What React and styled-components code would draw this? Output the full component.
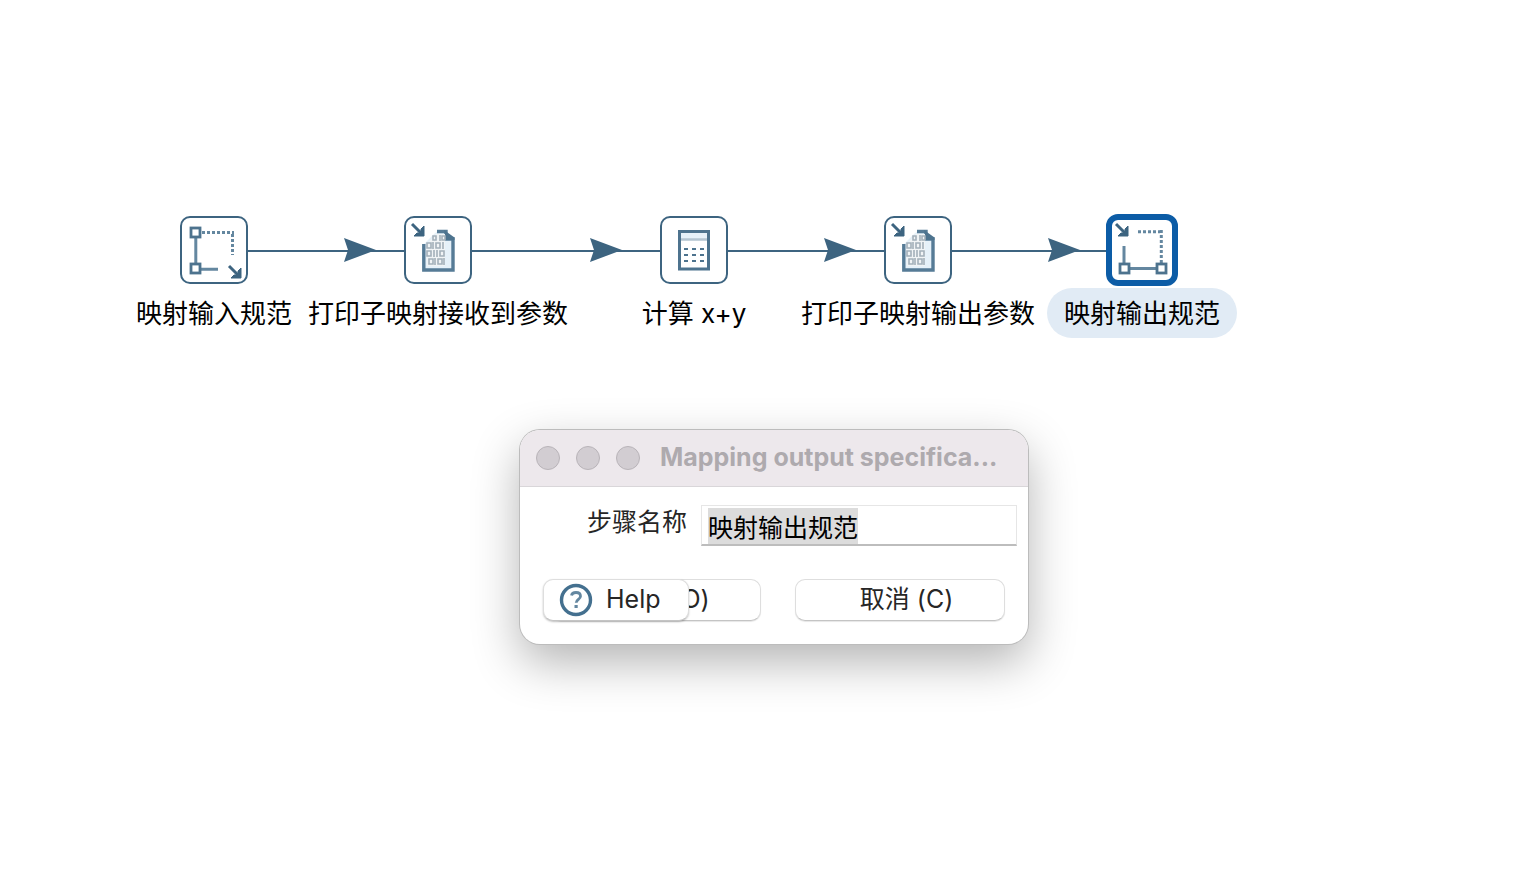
import React, { useEffect, useRef } from "react";
import styled, { createGlobalStyle } from "styled-components";

const ink = "#3d6480";
const mid = "#4d738e";
const soft = "#6487a0";
const tint = "#e6f1f9";

const GlobalStyle = createGlobalStyle`
  *, *::before, *::after { box-sizing: border-box; }
  body {
    margin: 0;
    background: #fff;
    color: #000;
    font-family: Inter, "Noto Sans CJK SC", sans-serif;
  }
  button, input { font: inherit; color: inherit; }
`;

const Canvas = styled.main`
  position: relative;
  width: 100%;
  min-height: 100vh;
  overflow: hidden;
`;

const Hops = styled.svg`
  position: absolute;
  left: 0;
  top: 0;
  width: 100%;
  height: 100%;
`;

const Step = styled.div`
  position: absolute;
  left: ${(p) => p.$x}px;
  top: 214px;
  display: flex;
  flex-direction: column;
  align-items: center;
  gap: 2px;
  width: 0;
`;

const StepBox = styled.div`
  display: flex;
  flex: none;
  align-items: center;
  justify-content: center;
  width: ${(p) => (p.$selected ? 72 : 68)}px;
  height: ${(p) => (p.$selected ? 72 : 68)}px;
  margin: ${(p) => (p.$selected ? 0 : 2)}px;
  border: ${(p) => (p.$selected ? "6px solid #0c5ca6" : `2px solid ${ink}`)};
  border-radius: ${(p) => (p.$selected ? 12 : 10)}px;
  background: #fff;
`;

const StepIcon = styled.svg`
  flex: none;
  width: 68px;
  height: 68px;
  fill: none;
`;

const StepLabel = styled.div`
  padding: 2px 17px 0;
  border-radius: 25px;
  background: ${(p) => (p.$selected ? "#e1ebf5" : "transparent")};
  font-size: 26px;
  line-height: 48px;
  white-space: nowrap;
`;

const Dialog = styled.form`
  position: absolute;
  left: 520px;
  top: 430px;
  width: 508px;
  border-radius: 20px;
  background: #fff;
  color: #262626;
  box-shadow: 0 0 0 1px #bcbcbc, 0 18px 48px rgba(0, 0, 0, 0.3);
`;

const TitleBar = styled.header`
  display: flex;
  align-items: center;
  gap: 20px;
  height: 57px;
  padding: 0 16px;
  border-bottom: 1px solid #d9d6d9;
  border-radius: 20px 20px 0 0;
  background: #ede8ec;
`;

const Lights = styled.div`
  display: flex;
  gap: 16px;
`;

const Light = styled.button`
  width: 24px;
  height: 24px;
  padding: 0;
  border: 1px solid #b9b4b9;
  border-radius: 50%;
  background: #d2cdd2;
`;

const Title = styled.h1`
  margin: 0;
  padding-bottom: 2px;
  color: #aeaaae;
  font-size: 25px;
  font-weight: 700;
  line-height: 32px;
  white-space: nowrap;
`;

const Field = styled.div`
  display: flex;
  align-items: flex-start;
  justify-content: flex-end;
  gap: 14px;
  padding: 18px 11px 0;
`;

const FieldLabel = styled.label`
  font-size: 25px;
  line-height: 34px;
`;

const TextInput = styled.input`
  width: 316px;
  height: 41px;
  padding: 4px 6px 2px;
  border: 1px solid #e6e6e6;
  border-bottom: 2px solid #bdbdbd;
  border-radius: 0;
  outline: none;
  background: #fff;
  color: #000;
  font-size: 25px;
  line-height: 33px;
  &::selection { background: rgba(220, 220, 220, 0.996); color: #000; }
`;

const Actions = styled.footer`
  position: relative;
  display: flex;
  justify-content: flex-end;
  gap: 34px;
  padding: 33px 23px 23px;
`;

const PushButton = styled.button`
  width: 210px;
  height: 42px;
  padding: 0 0 2px 13px;
  border: 1px solid #dedede;
  border-bottom-color: #c4c4c4;
  border-radius: 10px;
  background: #fff;
  box-shadow: 0 1px 1px rgba(0, 0, 0, 0.1);
  font-size: 25px;
  line-height: 38px;
  white-space: nowrap;
`;

const HelpButton = styled(PushButton)`
  position: absolute;
  left: 23px;
  top: 33px;
  display: flex;
  align-items: center;
  gap: 13px;
  width: 146px;
  padding: 0 15px;
  box-shadow: 0 1px 2px rgba(0, 0, 0, 0.25);
`;

const HelpText = styled.span`
  padding-bottom: 2px;
`;

const CornerArrow = ({ x, y }) => (
  <g transform={`translate(${x} ${y})`}>
    <path d="M0 0 8 8" stroke={ink} strokeWidth="3" />
    <path d="M2 12H12V2L9 5V7L7 9H5Z" fill={ink} stroke={ink} strokeWidth="1" />
  </g>
);

const Handle = ({ x, y }) => (
  <rect x={x - 4} y={y - 4} width="9" height="9" fill="#fff" stroke={mid} strokeWidth="2.8" />
);

const InputIcon = () => (
  <StepIcon viewBox="0 0 68 68">
    <path d="M15.8 20V49M20 53.3H38" stroke={soft} strokeWidth="3" />
    <path d="M22 16.5H54" stroke={soft} strokeWidth="3" strokeDasharray="3 2" />
    <path d="M52.5 18V39" stroke={soft} strokeWidth="3" strokeDasharray="3 2" />
    <Handle x={15} y={16} />
    <Handle x={15} y={52} />
    <CornerArrow x={49} y={50} />
  </StepIcon>
);

const OutputIcon = () => (
  <StepIcon viewBox="0 0 68 68">
    <path d="M16 30V48M20 52.5H49" stroke={soft} strokeWidth="3" />
    <path d="M30 15.7H52" stroke={soft} strokeWidth="3" strokeDasharray="3 2" />
    <path d="M53.3 14V47" stroke={soft} strokeWidth="3" strokeDasharray="3 2" />
    <Handle x={16} y={52} />
    <Handle x={53} y={52} />
    <CornerArrow x={8} y={8} />
  </StepIcon>
);

const bitRows = [
  { y: 27, zeros: [23, 32], ones: [29, 39] },
  { y: 35, zeros: [23, 36], ones: [30, 33] },
  { y: 43, zeros: [25, 34], ones: [31, 40] },
];

const LogIcon = () => (
  <StepIcon viewBox="0 0 68 68">
    <path d="M20 28 30 18 34 15H41L43 21H49V54H20Z" fill={tint} />
    <path d="M19.8 28V54H49V23H42V15.5H33" stroke="#567b96" strokeWidth="3.4" />
    <path d="M40 14 50.5 21.5V24H42Z" fill={mid} />
    <path d="M22 29 32 18H41V50H23Z" fill="#f1f4f6" />
    <g stroke="#a3b0ba" strokeWidth="1.6">
      <path d="M29 20h3v4h-3zM36 19v6M38 20h3v4h-3z" />
      {bitRows.map(({ y, zeros, ones }) => (
        <path
          key={y}
          d={zeros.map((x) => `M${x} ${y}h4v5h-4z`).join("") + ones.map((x) => `M${x} ${y - 1}v7`).join("")}
        />
      ))}
    </g>
    <CornerArrow x={8} y={8} />
  </StepIcon>
);

const CalculatorIcon = () => (
  <StepIcon viewBox="0 0 68 68">
    <path d="M20 15H48V23H20Z" fill={tint} />
    <path d="M20 23.5H48" stroke="#b3c4d1" strokeWidth="2.5" />
    <rect x="19.5" y="15.5" width="29" height="37.5" stroke={mid} strokeWidth="3" />
    <path d="M24 33H44M24 39H44M24 45H44" stroke={mid} strokeWidth="2.2" strokeDasharray="4 4" />
  </StepIcon>
);

const HelpIcon = () => (
  <svg width="34" height="34" viewBox="0 0 34 34" fill="none" aria-hidden="true">
    <circle cx="17" cy="17" r="14.5" stroke="#44708f" strokeWidth="3.4" />
    <path d="M12.5 12.5C13 10 15 9.5 17 9.5C19.8 9.5 21.5 11 21.5 13.3C21.5 16.3 17.2 16.5 17.2 19.7" stroke={soft} strokeWidth="2.8" />
    <rect x="15.5" y="22" width="3.2" height="3" fill={soft} />
  </svg>
);

const steps = [
  { x: 214, label: "映射输入规范", Icon: InputIcon },
  { x: 438, label: "打印子映射接收到参数", Icon: LogIcon },
  { x: 694, label: "计算 x+y", Icon: CalculatorIcon },
  { x: 918, label: "打印子映射输出参数", Icon: LogIcon },
  { x: 1142, label: "映射输出规范", Icon: OutputIcon, selected: true },
];

const arrows = [344, 590, 824, 1048];

export default function App() {
  const nameRef = useRef(null);
  useEffect(() => {
    nameRef.current.focus();
    nameRef.current.select();
  }, []);

  return (
    <>
      <GlobalStyle />
      <Canvas>
        <Hops aria-hidden="true">
          <path d="M214 251H1142" stroke={ink} strokeWidth="2" />
          {arrows.map((x) => (
            <path key={x} d={`M${x} 238 ${x + 32} 250 ${x} 262 ${x + 4} 250Z`} fill={ink} />
          ))}
        </Hops>
        {steps.map(({ x, label, Icon, selected }) => (
          <Step key={x} $x={x}>
            <StepBox $selected={selected}>
              <Icon />
            </StepBox>
            <StepLabel $selected={selected}>{label}</StepLabel>
          </Step>
        ))}
        <Dialog onSubmit={(e) => e.preventDefault()}>
          <TitleBar>
            <Lights>
              <Light type="button" aria-label="Close" />
              <Light type="button" aria-label="Minimize" />
              <Light type="button" aria-label="Zoom" />
            </Lights>
            <Title>Mapping output specifica...</Title>
          </TitleBar>
          <Field>
            <FieldLabel htmlFor="step-name">步骤名称</FieldLabel>
            <TextInput id="step-name" ref={nameRef} defaultValue="映射输出规范" />
          </Field>
          <Actions>
            <PushButton type="submit">确定 (O)</PushButton>
            <PushButton type="button">取消 (C)</PushButton>
            <HelpButton type="button">
              <HelpIcon />
              <HelpText>Help</HelpText>
            </HelpButton>
          </Actions>
        </Dialog>
      </Canvas>
    </>
  );
}
